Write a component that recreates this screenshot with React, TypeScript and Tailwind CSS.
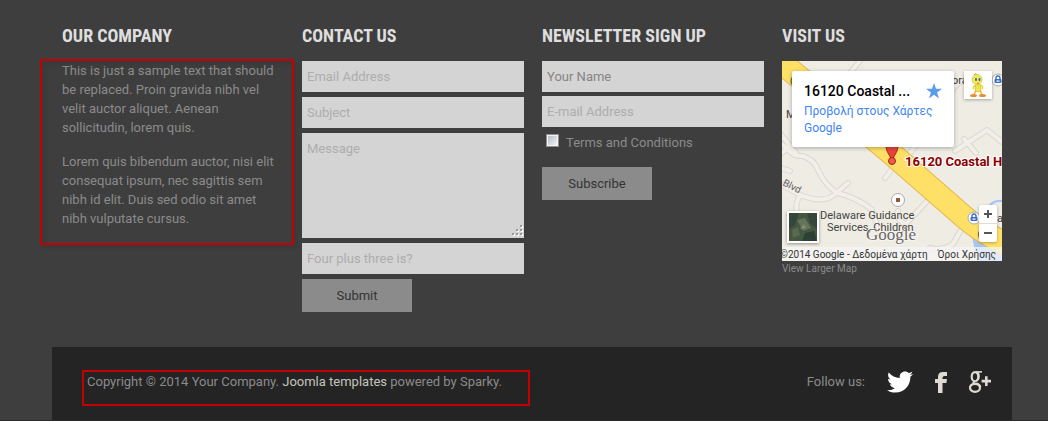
import type { ReactNode } from "react";
import { FaTwitter } from "react-icons/fa";

const FIELD =
  "block h-[31px] w-full bg-[#d4d4d4] px-[5px] text-[13px] text-[#777] outline-none";
const BUTTON = "h-[33px] w-[110px] bg-[#8b8b8b] text-[13px] text-[#333]";

function Column({ title, children }: { title: string; children: ReactNode }) {
  return (
    <section className="min-w-0 pr-2 pl-2.5">
      <h3 className="mb-3 font-['Roboto_Condensed','Roboto',sans-serif] text-[18px] leading-6 font-bold whitespace-nowrap text-[#dedede] uppercase">
        {title}
      </h3>
      {children}
    </section>
  );
}

function RoadLines({ className, width }: { className: string; width: number }) {
  return (
    <g className={className} fill="none" strokeWidth={width} strokeLinecap="round" strokeLinejoin="round">
      <path d="M-4 80 L3 86 Q12 96 20 95 Q32 98 36 109 Q44 126 56 132 Q78 138 90 149 L98 172" />
      <path d="M-4 121 Q16 134 24 136 Q42 142 52 134 L66 122" />
      <path d="M17 136 Q13 144 15 152" />
      <path d="M146 139 L124 163 Q112 158 116 150" />
      <path d="M103 117 L111 107" />
      <path d="M122 100 L137 80 L148 66" />
      <path d="M180 167 L171 183 Q160 190 148 187" />
      <path d="M173 90 L205 69 L224 84 M182 78 L194 92" />
      <path d="M81 -4 L68 12 M168 34 Q174 20 186 18" />
      <path d="M-4 95 L10 84 M-4 70 L14 92 M-4 106 L8 110" />
    </g>
  );
}

function MapDrawing() {
  return (
    <svg viewBox="0 0 220 200" preserveAspectRatio="xMidYMid slice" className="block h-full w-full" aria-hidden="true">
      <rect width="220" height="200" fill="#efece4" />
      <path d="M189 170 L220 190 V200 H195 Z" fill="#a4c6f7" />
      <path d="M206 146 Q212 139 220 140" fill="none" stroke="#a4c6f7" strokeWidth="2" />
      <RoadLines className="stroke-[#dcd8cf]" width={6} />
      <RoadLines className="stroke-[#f2efe9]" width={4} />
      <path d="M-10 -6 L103 87 L181 155 Q200 172 230 186" fill="none" stroke="#e3b84f" strokeWidth="24" />
      <path d="M-10 -6 L103 87 L181 155 Q200 172 230 186" fill="none" stroke="#ffe067" strokeWidth="22" />
      <path d="M110 102 C109 94 104 92 104 85 A6 6 0 0 1 116 85 C116 92 111 94 110 102 Z" fill="#e8453c" stroke="#a52714" />
      <circle cx="110" cy="100" r="3.5" fill="#ef5a50" stroke="#a52714" />
      <circle cx="116" cy="139" r="6.5" fill="#fff" stroke="#aaa" />
      <rect x="114" y="137" width="4" height="4" fill="#8d5b3c" />
      {[
        [192, 157],
        [216, 19],
      ].map(([x, y]) => (
        <g key={x} transform={`translate(${x} ${y})`}>
          <circle r="6" fill="#fff" stroke="#aaa" />
          <path d="M-2 0 V-2 A2 2 0 0 1 2 -2 V0" fill="none" stroke="#3c6ec4" strokeWidth="1.4" />
          <rect x="-3.5" y="-1" width="7" height="4" rx="1" fill="#3c6ec4" />
          <rect x="-1.5" y="0.5" width="3" height="1.2" fill="#fff" />
        </g>
      ))}
      <path d="M201 167 A7 7 0 0 0 201 180" fill="#fff" stroke="#444" />
      <path d="M11 15 Q7 20 11 25" fill="none" stroke="#444" />
      <g className="font-['Roboto',sans-serif] text-[11px]" fill="#444">
        <text x="170" y="23">ora</text>
        <text x="4" y="57">M</text>
        <text x="215" y="161">a</text>
        <text transform="translate(0 124) rotate(27)" fontSize="10" fill="#666">Blvd</text>
        <text x="38" y="158">Delaware Guidance</text>
        <text x="45" y="170">Services, Children</text>
      </g>
      <text x="84" y="179" className="font-['Liberation_Serif',serif] text-[17px]" fill="#666" stroke="#fff" strokeWidth="2" strokeOpacity="0.5" paintOrder="stroke">
        Google
      </text>
      <text x="123" y="105" className="font-['Roboto',sans-serif] text-[13px] font-bold" fill="#8b0000" stroke="#fff" strokeWidth="2" paintOrder="stroke">
        16120 Coastal H
      </text>
    </svg>
  );
}

function PegmanBird() {
  return (
    <svg viewBox="0 0 28 28" className="h-7 w-7" aria-hidden="true">
      <path d="M10 4 Q12 1 13 4" fill="none" stroke="#b98b5a" />
      <path d="M12 19 L10 24 M16 19 L18 24" stroke="#e8b63a" strokeWidth="1.5" />
      <path d="M12 14 Q8 16 10 18 M16 14 Q20 15 18 18" fill="none" stroke="#e6d636" strokeWidth="1.5" />
      <ellipse cx="14" cy="17" rx="3" ry="4" fill="#f0e548" stroke="#c9bb2d" strokeWidth=".6" />
      <ellipse cx="13" cy="8.5" rx="5" ry="5" fill="#f4eb56" stroke="#c9bb2d" strokeWidth=".6" />
      <ellipse cx="12" cy="8.5" rx="1" ry="1.8" fill="#3b6ea8" />
      <ellipse cx="15.5" cy="8.5" rx="1" ry="1.8" fill="#3b6ea8" />
      <path d="M12.5 11.5 L16 12 L14 13.3 Z" fill="#e8853a" />
      <ellipse cx="9.5" cy="24.5" rx="3.5" ry="1.6" fill="#ec8b35" />
      <ellipse cx="18.5" cy="24.5" rx="3.5" ry="1.6" fill="#ec8b35" />
    </svg>
  );
}

function FacebookIcon() {
  return (
    <svg viewBox="0 0 12 21" className="h-[21px] w-3" fill="currentColor" aria-hidden="true">
      <path d="M3 21 V11 H0 V7 H3 V5 Q3 0 8 0 H12 V4 H9.5 Q7.5 4 7.5 5.8 V7 H12 L11.4 11 H7.5 V21 Z" />
    </svg>
  );
}

function GooglePlusIcon() {
  return (
    <svg viewBox="0 0 22 22" className="h-[22px] w-[22px]" fill="none" stroke="currentColor" aria-hidden="true">
      <path d="M13 .9 H7" strokeWidth="1.6" />
      <ellipse cx="6" cy="5.7" rx="3.3" ry="4.6" strokeWidth="2.2" />
      <path d="M8.6 1.2 Q10.4 3.4 9.6 7.2 Q9 8.6 7.4 9.8" strokeWidth="1.8" />
      <path d="M5 10.4 Q3.6 12 6 13" strokeWidth="2.2" />
      <ellipse cx="6" cy="16.8" rx="5" ry="4" strokeWidth="2.2" />
      <path d="M7.4 12.2 Q11 13.6 11.4 16" strokeWidth="2" />
      <path d="M17.3 5.2 V15 M12.6 10.1 H22" strokeWidth="2.6" />
    </svg>
  );
}

function LocationMap() {
  return (
    <div className="relative h-[200px] overflow-hidden">
      <MapDrawing />
      <div className="absolute top-2.5 left-2.5 w-[162px] rounded-[2px] bg-white px-3 py-2.5 shadow-[0_1px_4px_rgba(0,0,0,0.3)]">
        <div className="flex items-center justify-between">
          <span className="text-[14px] leading-5 font-medium whitespace-nowrap text-black">16120 Coastal ...</span>
          <svg viewBox="0 0 16 16" className="h-4 w-4" aria-hidden="true">
            <path d="M8 0 L10 5.8 H16 L11.1 9.4 L13 15.4 L8 11.8 L3 15.4 L4.9 9.4 L0 5.8 H6 Z" fill="#5b9be8" />
          </svg>
        </div>
        <a href="#maps" className="mt-0.5 block text-[12px] leading-[17px] text-[#4285f4]">
          <span className="whitespace-nowrap">Προβολή στους Χάρτες</span> Google
        </a>
      </div>
      <div className="absolute top-2.5 right-2.5 bg-white shadow-[0_1px_3px_rgba(0,0,0,0.3)]">
        <PegmanBird />
      </div>
      <svg viewBox="0 0 32 32" className="absolute top-[150px] left-[5px] h-8 w-8 shadow-[0_1px_3px_rgba(0,0,0,0.4)]" aria-hidden="true">
        <rect width="32" height="32" fill="#fff" />
        <rect x="2" y="2" width="28" height="28" fill="#45573f" />
        <path d="M2 2 H12 L8 14 L2 18 Z M20 2 H30 V18 L23 12 Z" fill="#35463a" />
        <path d="M10 9 L18 7 L24 17 L16 20 Z" fill="#64745a" />
        <path d="M5 19 L11 16 L13 24 L6 27 Z" fill="#596953" />
        <path d="M18 22 L27 20 L30 30 H15 Z" fill="#2c4034" />
        <path d="M13 18 L17 13 L19 17 Z" fill="#858a73" />
      </svg>
      <div className="absolute top-36 right-[5px] flex w-[18px] flex-col rounded-[2px] bg-white text-[#555] shadow-[0_1px_3px_rgba(0,0,0,0.3)]">
        <button type="button" aria-label="Zoom in" className="flex h-[19px] items-center justify-center border-b border-[#ddd]">
          <svg viewBox="0 0 8 8" className="h-2 w-2" stroke="currentColor" strokeWidth="2"><path d="M4 0 V8 M0 4 H8" /></svg>
        </button>
        <button type="button" aria-label="Zoom out" className="flex h-[18px] items-center justify-center">
          <svg viewBox="0 0 8 8" className="h-2 w-2" stroke="currentColor" strokeWidth="2"><path d="M0 4 H8" /></svg>
        </button>
      </div>
      <div className="absolute inset-x-0 bottom-0 flex h-3.5 items-center justify-end gap-2.5 bg-[#f5f5f5]/75 pr-1.5 text-[10px] whitespace-nowrap text-[#333]">
        <span>©2014 Google - Δεδομένα χάρτη</span>
        <a href="#terms">Όροι Χρήσης</a>
      </div>
    </div>
  );
}

export default function App() {
  return (
    <div className="flex min-h-screen flex-col border-b border-[#2a2a2a] bg-[#3e3e3e] pt-6 pr-9 pl-[52px] font-['Roboto','Noto_Sans',sans-serif] text-[13px] text-[#8b8b8b]">
      <main className="grid grid-cols-4 pb-[35px]">
        <Column title="Our Company">
          <div className="relative mt-[13px] flex flex-col gap-[15px] leading-[19px]">
            <p>
              This is just a sample text that should be replaced. Proin gravida nibh vel velit auctor aliquet. Aenean
              sollicitudin, lorem quis.
            </p>
            <p>
              Lorem quis bibendum auctor, nisi elit consequat ipsum, nec sagittis sem nibh id elit. Duis sed odio sit
              amet nibh vulputate cursus.
            </p>
            <div className="pointer-events-none absolute -top-0.5 -right-2.5 -bottom-[17px] -left-[22px] border-2 border-[#c40000] shadow-[3px_4px_4px_rgba(0,0,0,0.08),inset_3px_4px_4px_rgba(0,0,0,0.08)]" />
          </div>
        </Column>

        <Column title="Contact Us">
          <form className="mt-[13px] flex flex-col items-start gap-[5px]">
            <input aria-label="Email Address" placeholder="Email Address" className={`${FIELD} placeholder:text-[#adadad]`} />
            <input aria-label="Subject" placeholder="Subject" className={`${FIELD} placeholder:text-[#adadad]`} />
            <div className="relative w-full">
              <textarea
                aria-label="Message"
                placeholder="Message"
                className="block h-[105px] w-full resize-none bg-[#d4d4d4] px-[5px] py-1.5 text-[13px] text-[#777] outline-none placeholder:text-[#adadad]"
              />
              <svg viewBox="0 0 14 14" className="pointer-events-none absolute right-0 bottom-0 h-3.5 w-3.5" aria-hidden="true">
                {[[10, 1], [6, 5], [10, 5], [2, 9], [6, 9], [10, 9]].map(([x, y]) => (
                  <g key={`${x}-${y}`}>
                    <rect x={x + 1} y={y + 1} width="2" height="2" fill="#fff" />
                    <rect x={x} y={y} width="2" height="2" fill="#999" />
                  </g>
                ))}
              </svg>
            </div>
            <input aria-label="Four plus three is?" placeholder="Four plus three is?" className={`${FIELD} placeholder:text-[#adadad]`} />
            <button type="button" className={BUTTON}>Submit</button>
          </form>
        </Column>

        <Column title="Newsletter Sign Up">
          <form className="mt-[13px] flex flex-col items-start gap-1">
            <input aria-label="Your Name" placeholder="Your Name" className={`${FIELD} placeholder:text-[#858585]`} />
            <input aria-label="E-mail Address" placeholder="E-mail Address" className={`${FIELD} placeholder:text-[#adadad]`} />
            <label className="mt-0.5 mb-2.5 flex items-start gap-[7px] pl-1 leading-5">
              <input
                type="checkbox"
                className="mt-px h-[13px] w-[13px] appearance-none border-2 border-[#f4f4f4] bg-[linear-gradient(135deg,#b5bcc4,#f4f4f4)] outline outline-1 -outline-offset-1 outline-[#8e8f8f]"
              />
              Terms and Conditions
            </label>
            <button type="button" className={BUTTON}>Subscribe</button>
          </form>
        </Column>

        <Column title="Visit Us">
          <div className="mt-[13px] mr-0.5">
            <LocationMap />
            <a href="#larger-map" className="block text-[10px] leading-[15px]">View Larger Map</a>
          </div>
        </Column>
      </main>

      <footer className="flex flex-1 items-start justify-between bg-[#242424] pt-6 pr-[21px] pl-[35px]">
        <p className="relative leading-[22px]">
          Copyright © 2014 Your Company. <a href="#joomla" className="text-[#c4c4bd]">Joomla templates</a> powered by Sparky.
          <span className="pointer-events-none absolute -top-px -right-7 -bottom-[13px] -left-[5px] border-2 border-[#c40000]" />
        </p>
        <div className="flex items-center gap-[22px] leading-[22px]">
          <span>Follow us:</span>
          <a href="#twitter" aria-label="Twitter" className="text-white"><FaTwitter size={26} className="-my-0.5" /></a>
          <a href="#facebook" aria-label="Facebook" className="text-[#dedbd4]"><FacebookIcon /></a>
          <a href="#google-plus" aria-label="Google Plus" className="text-[#dedbd4]"><GooglePlusIcon /></a>
        </div>
      </footer>
    </div>
  );
}
